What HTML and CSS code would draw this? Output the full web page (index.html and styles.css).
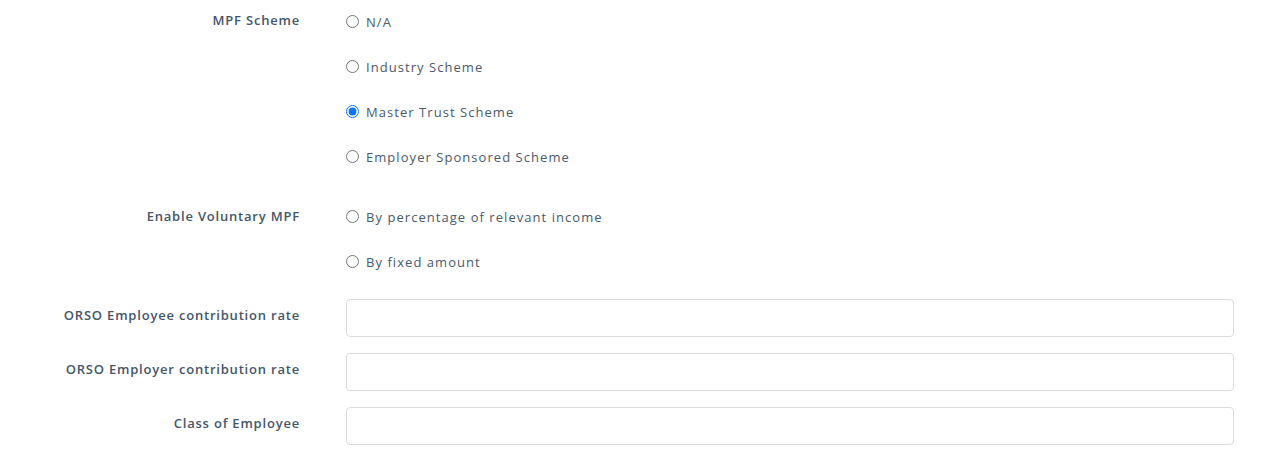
FILE: index.html
```html
<!DOCTYPE html>
<html>
<head>
<meta charset="utf-8">
<link rel="stylesheet" href="styles.css">
</head>
<body>
<form class="form">
  <div class="row group">
    <div class="label">MPF Scheme</div>
    <div class="options">
      <label class="opt"><input type="radio" name="mpf"><span>N/A</span></label>
      <label class="opt"><input type="radio" name="mpf"><span>Industry Scheme</span></label>
      <label class="opt"><input type="radio" name="mpf" checked><span>Master Trust Scheme</span></label>
      <label class="opt"><input type="radio" name="mpf"><span>Employer Sponsored Scheme</span></label>
    </div>
  </div>
  <div class="row group">
    <div class="label low">Enable Voluntary MPF</div>
    <div class="options">
      <label class="opt"><input type="radio" name="vol"><span>By percentage of relevant income</span></label>
      <label class="opt"><input type="radio" name="vol"><span>By fixed amount</span></label>
    </div>
  </div>
  <div class="row field first">
    <div class="label">ORSO Employee contribution rate</div>
    <input class="text" type="text">
  </div>
  <div class="row field">
    <div class="label">ORSO Employer contribution rate</div>
    <input class="text" type="text">
  </div>
  <div class="row field">
    <div class="label">Class of Employee</div>
    <input class="text" type="text">
  </div>
</form>
</body>
</html>
```
FILE: styles.css
```css
html, body {
  margin: 0;
  padding: 0;
  background: #ffffff;
}
body {
  font-family: "Open Sans", "Liberation Sans", sans-serif;
}
.form {
  display: flex;
  flex-direction: column;
  width: 1234px;
}
.row {
  display: grid;
  grid-template-columns: 300px 888px;
  column-gap: 46px;
}
.group + .group {
  margin-top: 15px;
}
.field.first {
  margin-top: 14px;
}
.field + .field {
  margin-top: 16px;
}
.label {
  text-align: right;
  font-size: 13px;
  font-weight: 600;
  letter-spacing: 0.8px;
  color: #45566a;
  line-height: 16px;
}
.group .label {
  padding-top: 12px;
}
.group .label.low {
  padding-top: 13px;
}
.field .label {
  padding-top: 8px;
}
.options {
  display: flex;
  flex-direction: column;
}
.opt {
  box-sizing: border-box;
  height: 45px;
  padding-bottom: 2px;
  display: flex;
  align-items: center;
  font-size: 13px;
  letter-spacing: 1.05px;
  color: #4a596b;
}
.opt input {
  width: 13px;
  height: 13px;
  margin: 0 7px 0 0;
  accent-color: #0a75ff;
}
.text {
  box-sizing: border-box;
  height: 38px;
  width: 888px;
  margin: 0;
  border: 1px solid #dcdcdc;
  border-radius: 4px;
  background: #fff;
  outline: none;
  font: inherit;
  padding: 0 10px;
}
```
